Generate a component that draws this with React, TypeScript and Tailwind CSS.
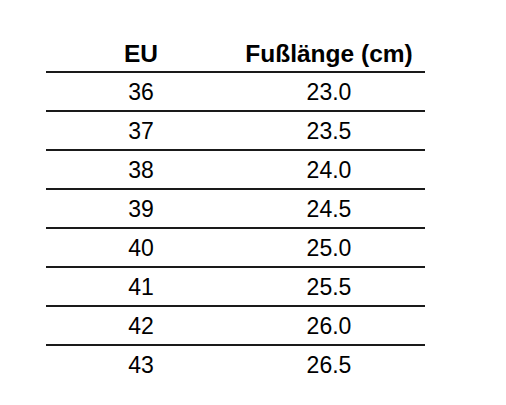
const rows: [string, string][] = [
  ["36", "23.0"],
  ["37", "23.5"],
  ["38", "24.0"],
  ["39", "24.5"],
  ["40", "25.0"],
  ["41", "25.5"],
  ["42", "26.0"],
  ["43", "26.5"],
];

export default function App() {
  return (
    <div className="w-[506px] h-[405px] bg-white pt-[35px] pl-[46px] font-['Liberation_Sans',Arial,sans-serif] text-[23px] leading-[26px] text-black">
      <div className="w-[379px]">
        <div className="grid grid-cols-[190px_189px] border-b-2 border-[#1a1a1a] pt-[6px] pb-[4px] font-bold text-[24.5px]">
          <div className="text-center">EU</div>
          <div className="text-center pr-[3px]">Fußlänge (cm)</div>
        </div>
        {rows.map(([eu, cm], i) => (
          <div
            key={eu}
            className={
              i < rows.length - 1
                ? "grid grid-cols-[190px_189px] border-b-2 border-[#1a1a1a] pt-[6px] pb-[5px]"
                : "grid grid-cols-[190px_189px] pt-[6px] pb-[5px]"
            }
          >
            <div className="text-center">{eu}</div>
            <div className="text-center pr-[3px]">{cm}</div>
          </div>
        ))}
      </div>
    </div>
  );
}
